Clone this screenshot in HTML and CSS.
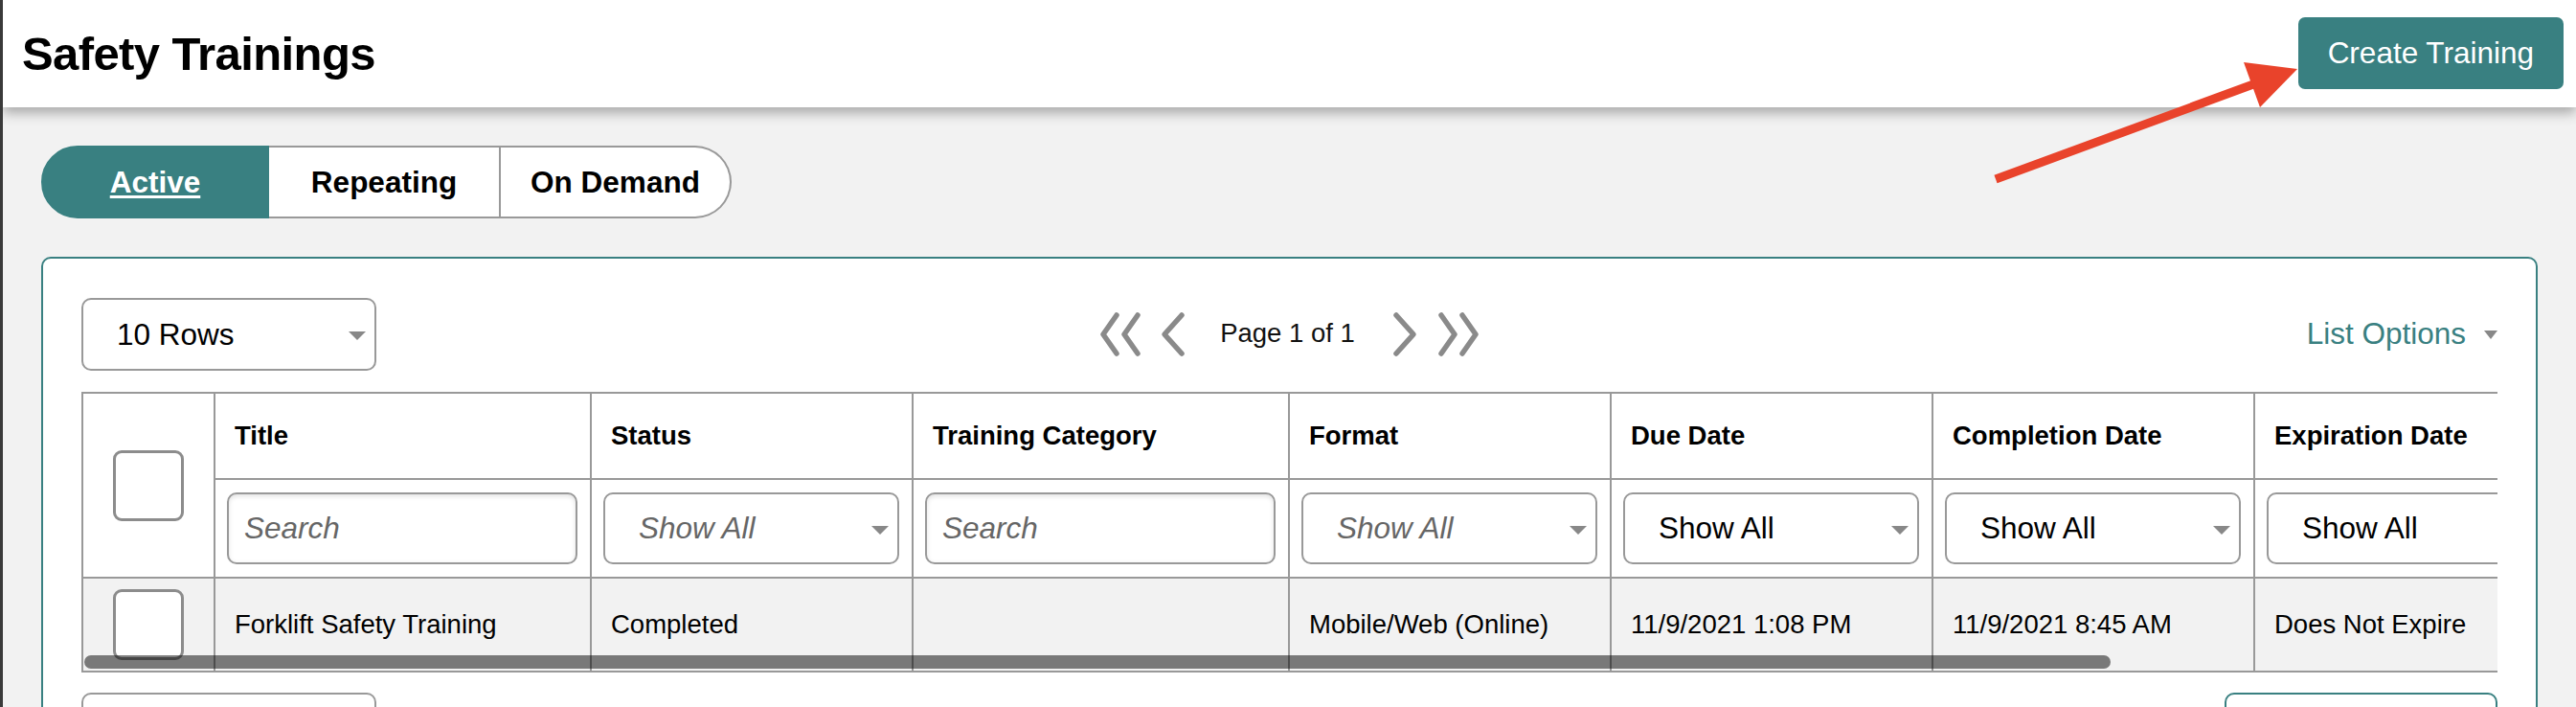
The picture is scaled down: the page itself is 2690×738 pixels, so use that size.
FILE: index.html
```html
<!DOCTYPE html>
<html lang="en">
<head>
    <meta charset="UTF-8">
    <meta name="viewport" content="width=device-width, initial-scale=1.0">
    <title>Safety Trainings</title>
    <link rel="stylesheet" href="styles.css">
</head>
<body>
    <header class="page-header">
        <h1 class="page-title">Safety Trainings</h1>
        <button class="btn-primary">Create Training</button>
    </header>

    <!-- callout pointing at the create button -->
    <svg class="callout-arrow" width="340" height="150" viewBox="0 0 340 150">
        <line x1="14" y1="137" x2="283" y2="38" stroke="#e9432b" stroke-width="9"/>
        <polygon points="273,15 329,22 290,62" fill="#e9432b"/>
    </svg>

    <main class="page-body">
        <nav class="tab-group">
            <a class="tab tab-active" href="#">Active</a>
            <a class="tab" href="#">Repeating</a>
            <a class="tab" href="#">On Demand</a>
        </nav>

        <section class="list-card">
            <div class="list-toolbar">
                <div class="select select-rows">10 Rows</div>

                <div class="pager">
                    <svg class="pager-btn pager-first" width="42" height="50" viewBox="0 0 42 50">
                        <polyline points="17,5 3,25 17,45"/>
                        <polyline points="39,5 25,25 39,45"/>
                    </svg>
                    <svg class="pager-btn pager-prev" width="26" height="50" viewBox="0 0 26 50">
                        <polyline points="22,5 4,25 22,45"/>
                    </svg>
                    <span class="pager-label">Page 1 of 1</span>
                    <svg class="pager-btn pager-next" width="26" height="50" viewBox="0 0 26 50">
                        <polyline points="4,5 22,25 4,45"/>
                    </svg>
                    <svg class="pager-btn pager-last" width="42" height="50" viewBox="0 0 42 50">
                        <polyline points="3,5 17,25 3,45"/>
                        <polyline points="25,5 39,25 25,45"/>
                    </svg>
                </div>

                <div class="list-options">List Options</div>
            </div>

            <div class="table-wrap">
                <table class="records">
                    <colgroup>
                        <col class="col-check">
                        <col class="col-wide">
                        <col class="col-std">
                        <col class="col-wide">
                        <col class="col-std">
                        <col class="col-std">
                        <col class="col-std">
                        <col class="col-std">
                    </colgroup>
                    <thead>
                        <tr class="head-row">
                            <th class="check-col" rowspan="2"><span class="check"></span></th>
                            <th>Title</th>
                            <th>Status</th>
                            <th>Training Category</th>
                            <th>Format</th>
                            <th>Due Date</th>
                            <th>Completion Date</th>
                            <th>Expiration Date</th>
                        </tr>
                        <tr class="filter-row">
                            <th><input class="search" type="text" placeholder="Search"></th>
                            <th><div class="select select-empty">Show All</div></th>
                            <th><input class="search" type="text" placeholder="Search"></th>
                            <th><div class="select select-empty">Show All</div></th>
                            <th><div class="select">Show All</div></th>
                            <th><div class="select">Show All</div></th>
                            <th><div class="select">Show All</div></th>
                        </tr>
                    </thead>
                    <tbody>
                        <tr>
                            <td class="check-col"><span class="check"></span></td>
                            <td>Forklift Safety Training</td>
                            <td>Completed</td>
                            <td></td>
                            <td>Mobile/Web (Online)</td>
                            <td>11/9/2021 1:08 PM</td>
                            <td>11/9/2021 8:45 AM</td>
                            <td>Does Not Expire</td>
                        </tr>
                    </tbody>
                </table>
                <div class="hscroll"></div>
            </div>

            <div class="list-footer">
                <div class="select select-bulk"></div>
                <button class="btn-outline"></button>
            </div>
        </section>
    </main>
</body>
</html>
```

FILE: styles.css
```css
html, body {
    height: 738px;
    overflow: hidden;
}

body {
    margin: 0;
    position: relative;
    background: #f2f2f2;
    border-left: 3px solid #3a3a3a;
    font-family: 'Liberation Sans', Arial, Helvetica, sans-serif;
    color: #000;
}

/* Top bar */
.page-header {
    position: relative;
    z-index: 1;
    height: 112px;
    box-sizing: border-box;
    padding: 0 13px 0 20px;
    display: flex;
    align-items: center;
    justify-content: space-between;
    background: #fff;
    box-shadow: 0 6px 12px rgba(0, 0, 0, 0.3);
}

.page-title {
    margin: 0;
    font-size: 49px;
    font-weight: bold;
    letter-spacing: -0.6px;
}

.btn-primary {
    height: 75px;
    padding: 0 31px;
    border: none;
    border-radius: 7px;
    background: #398081;
    color: #fff;
    font-family: inherit;
    font-size: 31.5px;
    margin-top: -1px;
}

.callout-arrow {
    position: absolute;
    left: 2067px;
    top: 50px;
    z-index: 2;
}

.page-body {
    padding: 40px 40px 0;
}

/* Tabs */
.tab-group {
    display: flex;
    height: 76px;
}

.tab {
    box-sizing: border-box;
    display: flex;
    align-items: center;
    justify-content: center;
    height: 76px;
    border: 2px solid #999;
    background: #fff;
    color: #000;
    font-size: 31.5px;
    font-weight: bold;
    text-decoration: none;
}

.tab-active {
    width: 238px;
    border-color: #398081;
    border-radius: 38px 0 0 38px;
    background: #398081;
    color: #fff;
    text-decoration: underline;
    text-underline-offset: 3px;
}

.tab:nth-child(2) {
    width: 242px;
    border-left: none;
}

.tab:last-child {
    width: 241px;
    border-left: none;
    border-radius: 0 38px 38px 0;
}

/* Card holding the list */
.list-card {
    margin-top: 40px;
    padding: 41px 40px 40px;
    border: 2px solid #398081;
    border-radius: 10px;
    background: #fff;
}

.list-toolbar {
    display: grid;
    grid-template-columns: 1fr auto 1fr;
    align-items: center;
    height: 76px;
}

.select {
    position: relative;
    box-sizing: border-box;
    height: 75px;
    padding: 0 40px 0 35px;
    display: flex;
    align-items: center;
    border: 2px solid #999;
    border-radius: 10px;
    background: #fff;
    font-size: 31.5px;
    white-space: nowrap;
}

.select::after {
    content: '';
    position: absolute;
    right: 9px;
    top: 50%;
    margin-top: -3px;
    border-left: 9px solid transparent;
    border-right: 9px solid transparent;
    border-top: 9px solid #888;
}

.select-rows {
    width: 308px;
    height: 76px;
}

.select-empty {
    color: #666;
    font-style: italic;
}

.pager {
    display: flex;
    align-items: center;
}

.pager-btn polyline {
    fill: none;
    stroke: #8a8a8a;
    stroke-width: 5.5;
    stroke-linecap: round;
    stroke-linejoin: round;
}

.pager-first { margin-right: 21px; }
.pager-prev { margin-right: 36px; }
.pager-next { margin-left: 39px; }
.pager-last { margin-left: 22px; }

.pager-label {
    font-size: 27.5px;
    color: #111;
    margin-top: -3px;
}

.list-options {
    justify-self: end;
    display: flex;
    align-items: center;
    color: #398081;
    font-size: 31.5px;
    margin-top: -2px;
}

.list-options::after {
    content: '';
    margin-left: 19px;
    margin-top: 2px;
    border-left: 7.5px solid transparent;
    border-right: 7.5px solid transparent;
    border-top: 9px solid #888;
}

/* Records table */
.table-wrap {
    position: relative;
    margin-top: 22px;
    overflow: hidden;
}

.records {
    border-collapse: collapse;
    table-layout: fixed;
    width: 2604px;
}

.col-check { width: 138px; }
.col-wide { width: 393px; }
.col-std { width: 336px; }

.records th,
.records td {
    border: 2px solid #999;
    padding: 0 0 0 20px;
    text-align: left;
    vertical-align: middle;
    font-size: 27.5px;
    white-space: nowrap;
    overflow: hidden;
}

.head-row th {
    height: 88px;
    font-weight: bold;
}

.filter-row th {
    height: 101px;
    padding: 0 13px 0 12px;
    font-weight: normal;
}

.records tbody td {
    height: 96px;
    background: #f2f2f2;
}

.records .check-col {
    padding: 0;
    text-align: center;
}

.check {
    display: inline-block;
    vertical-align: middle;
    width: 74px;
    height: 74px;
    box-sizing: border-box;
    border: 3.5px solid #8c8c8c;
    border-radius: 9px;
    background: #fff;
}

.search {
    display: block;
    box-sizing: border-box;
    width: 100%;
    height: 75px;
    padding: 0 16px;
    border: 2px solid #999;
    border-radius: 10px;
    box-shadow: inset 0 2px 5px rgba(0, 0, 0, 0.12);
    font-family: inherit;
    font-size: 31.5px;
    outline: none;
}

.search::placeholder {
    color: #666;
    font-style: italic;
}

.filter-row .select {
    width: 100%;
}

.hscroll {
    position: absolute;
    left: 3px;
    bottom: 4px;
    width: 2116px;
    height: 14px;
    border-radius: 7px;
    background: rgba(0, 0, 0, 0.5);
}

.list-footer {
    display: flex;
    justify-content: space-between;
    margin-top: 21px;
}

.select-bulk {
    width: 308px;
    height: 76px;
}

.btn-outline {
    width: 285px;
    height: 76px;
    border: 2px solid #398081;
    border-radius: 10px;
    background: #fff;
}
```
